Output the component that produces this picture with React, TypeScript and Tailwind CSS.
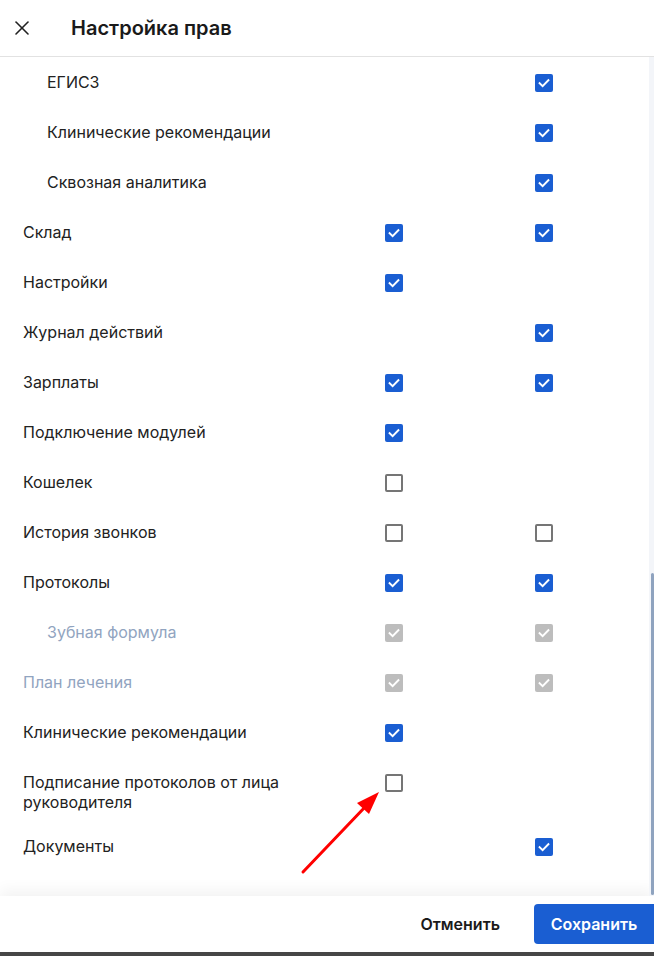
import React from 'react';
import { X } from 'lucide-react';

type Mark = 'on' | 'off' | 'dis' | null;

type Row = { label: string; sub?: boolean; muted?: boolean; a: Mark; b: Mark; tall?: boolean };

const rows: Row[] = [
    { label: 'ЕГИСЗ', sub: true, a: null, b: 'on' },
    { label: 'Клинические рекомендации', sub: true, a: null, b: 'on' },
    { label: 'Сквозная аналитика', sub: true, a: null, b: 'on' },
    { label: 'Склад', a: 'on', b: 'on' },
    { label: 'Настройки', a: 'on', b: null },
    { label: 'Журнал действий', a: null, b: 'on' },
    { label: 'Зарплаты', a: 'on', b: 'on' },
    { label: 'Подключение модулей', a: 'on', b: null },
    { label: 'Кошелек', a: 'off', b: null },
    { label: 'История звонков', a: 'off', b: 'off' },
    { label: 'Протоколы', a: 'on', b: 'on' },
    { label: 'Зубная формула', sub: true, muted: true, a: 'dis', b: 'dis' },
    { label: 'План лечения', muted: true, a: 'dis', b: 'dis' },
    { label: 'Клинические рекомендации', a: 'on', b: null },
    { label: 'Подписание протоколов от лица руководителя', a: 'off', b: null, tall: true },
    { label: 'Документы', a: null, b: 'on' },
];

const Check: React.FC<{ mark: Mark }> = ({ mark }) => {
    if (!mark) return <div className="w-[18px] h-[18px]" />;
    if (mark === 'off') {
        return <div className="w-[18px] h-[18px] rounded-[2px] border-2 border-[#757575] bg-white" />;
    }
    return (
        <div className={`w-[18px] h-[18px] rounded-[2px] flex items-center justify-center ${mark === 'on' ? 'bg-[#1a5ed2]' : 'bg-[#bdbdbd]'}`}>
            <svg width="14" height="14" viewBox="0 0 14 14" fill="none">
                <path d="M2.6 7.2 L5.6 10.1 L11.4 4.2" stroke="white" strokeWidth="1.9" strokeLinecap="square" />
            </svg>
        </div>
    );
};

export default function App() {
    return (
        <div className="relative w-[654px] h-[956px] flex flex-col overflow-hidden bg-white text-[#212121]" style={{ fontFamily: 'Inter, "Noto Sans", sans-serif' }}>
            <div className="h-[57px] shrink-0 flex items-center border-b border-[#e2e2e2] pl-[10px]">
                <X size={24} strokeWidth={1.6} className="text-[#212121]" />
                <h1 className="ml-[37px] text-[20px] font-semibold text-[#1a1a1a]">Настройка прав</h1>
            </div>

            <div className="flex-1 overflow-hidden pt-[1px]">
                {rows.map((r, i) => (
                    <div
                        key={i}
                        className={`grid grid-cols-[362px_18px_132px_18px] pl-[23px] ${r.tall ? 'pt-[14px] pb-[10px] items-start' : 'h-[50px] items-center'}`}
                    >
                        <div className={`text-[16px] leading-[20px] ${r.tall ? 'max-w-[300px]' : '-mt-[2px]'} ${r.sub ? 'pl-[24px]' : ''} ${r.muted ? 'text-[#91a4c0]' : 'text-[#222]'}`}>
                            {r.label}
                        </div>
                        <div className={r.tall ? 'mt-[2px]' : ''}><Check mark={r.a} /></div>
                        <div />
                        <Check mark={r.b} />
                    </div>
                ))}
            </div>

            <div className="h-[56px] shrink-0 flex items-center justify-end bg-white shadow-[0_-6px_14px_rgba(0,0,0,0.05)] relative">
                <button className="h-[40px] px-[17px] text-[16px] font-semibold text-[#1a1a1a] mr-[17px]">Отменить</button>
                <button className="h-[40px] w-[120px] rounded-l-[4px] bg-[#1a5ed2] text-white text-[16px] font-semibold">Сохранить</button>
            </div>
            <div className="h-[4px] shrink-0 bg-[#474747]" />

            <div className="absolute left-[649px] top-[57px] w-[5px] h-[839px] bg-[#f3f5f9]" />
            <div className="absolute left-[651px] top-[573px] w-[3px] h-[322px] rounded-[2px] bg-[#8fa3bf]" />

            <svg className="absolute left-0 top-0 pointer-events-none" width="654" height="956">
                <line x1="303" y1="872" x2="366" y2="806" stroke="#ff0000" strokeWidth="3" strokeLinecap="round" />
                <polygon points="379,792 357,803 369,814" fill="#ff0000" />
            </svg>
        </div>
    );
}
